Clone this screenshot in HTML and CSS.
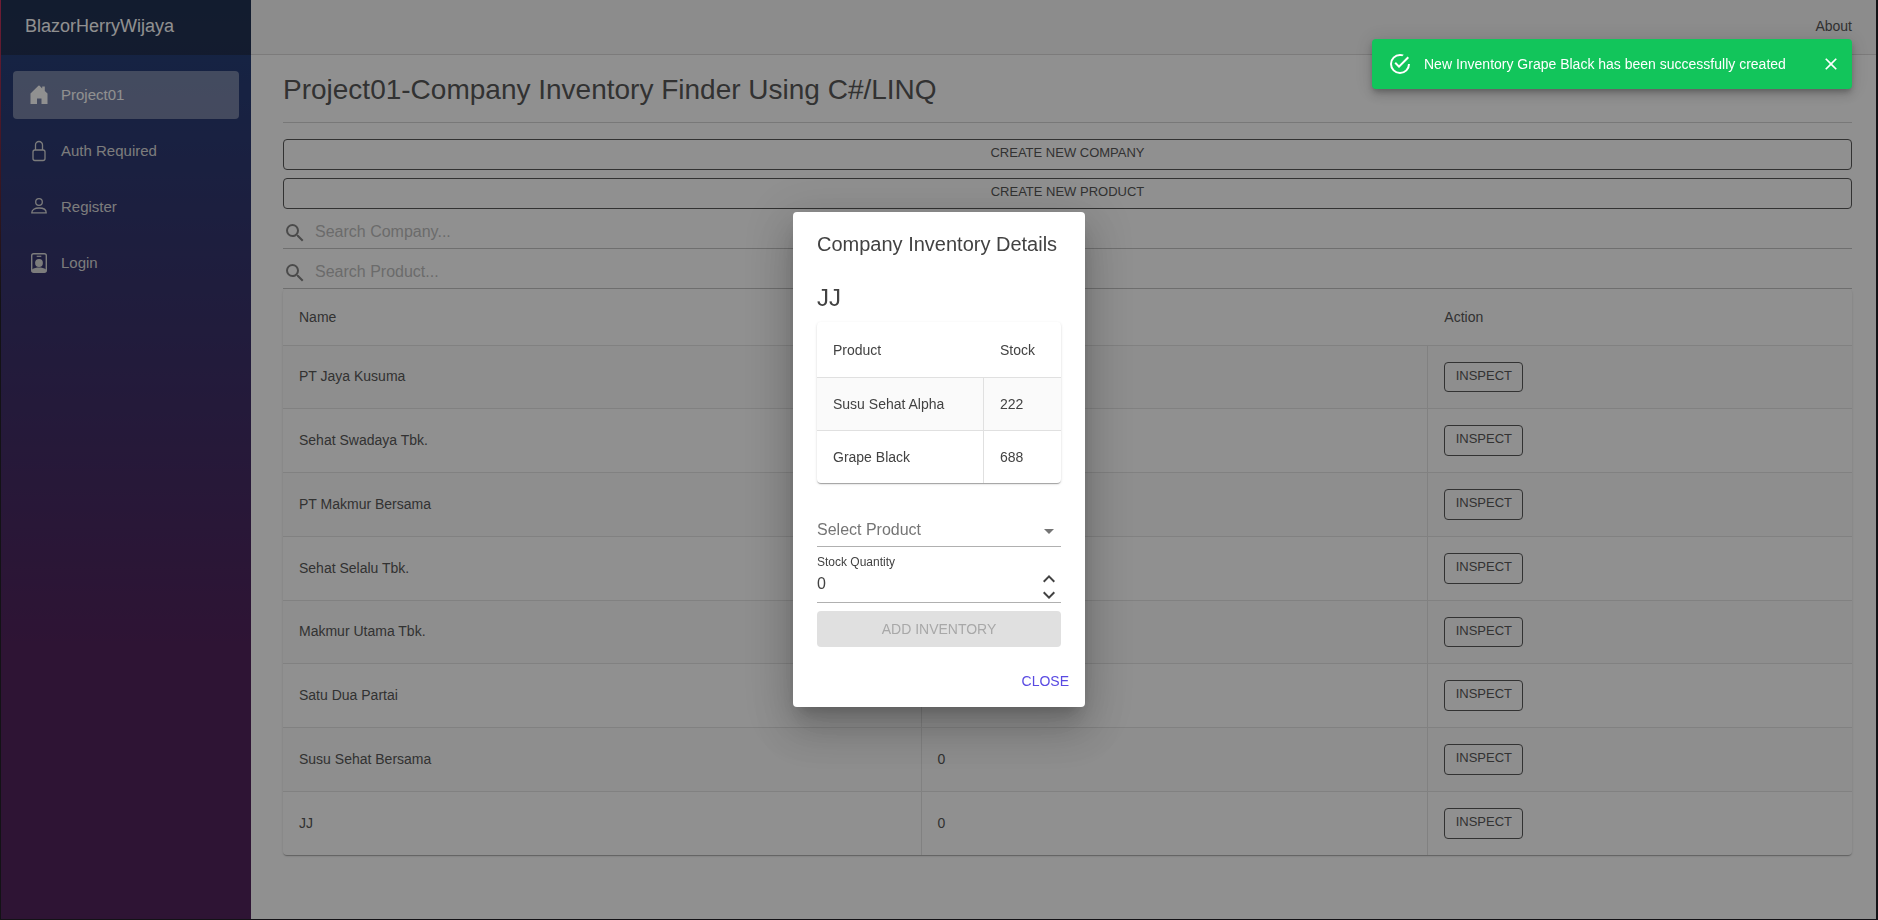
FILE: index.html
```html
<!DOCTYPE html>
<html lang="en">
<head>
<meta charset="utf-8">
<title>BlazorHerryWijaya</title>
<link rel="stylesheet" href="styles.css">
</head>
<body>
<div class="page">
  <aside class="sidebar">
    <div class="brand"><a class="brand-link" href="#">BlazorHerryWijaya</a></div>
    <nav class="nav">
      <a class="nav-link active" href="#">
        <svg class="nav-icon" viewBox="0 0 24 24"><path fill="currentColor" d="M3.500 10.600 11.400 2.800q.6-.6 1.200 0L15.200 5.400V3.400h2.600v4.600l2.700 2.600V21h-6v-5.600H10V21H3.500z"/></svg>
        <span>Project01</span>
      </a>
      <a class="nav-link" href="#">
        <svg class="nav-icon" viewBox="0 0 24 24" fill="none" stroke="currentColor" stroke-width="1.300"><rect x="6" y="11" width="12" height="10.500" rx="2"/><path d="M8.500 11V6a3.500 3.500 0 0 1 7 0v5"/></svg>
        <span>Auth Required</span>
      </a>
      <a class="nav-link" href="#">
        <svg class="nav-icon" viewBox="0 0 24 24" fill="none" stroke="currentColor" stroke-width="1.300"><circle cx="12" cy="7" r="3.300"/><path d="M4.800 17.800c0-3 3-4.800 7.200-4.800s7.200 1.800 7.200 4.800z"/></svg>
        <span>Register</span>
      </a>
      <a class="nav-link" href="#">
        <svg class="nav-icon" viewBox="0 0 24 24"><rect x="4.700" y="2.700" width="14.600" height="18.600" rx="2" fill="none" stroke="currentColor" stroke-width="1.400"/><path stroke="currentColor" stroke-width="1.200" d="M9.700 5.300h4.600"/><circle cx="12" cy="12" r="3.900" fill="currentColor"/><path fill="currentColor" d="M5 18.600c2-1.400 4.500-2 7-2s5 .6 7 2V21H5z"/></svg>
        <span>Login</span>
      </a>
    </nav>
  </aside>
  <main class="main">
    <header class="topbar"><a class="topbar-link" href="#">About</a></header>
    <div class="content">
      <h1 class="title">Project01-Company Inventory Finder Using C#/LINQ</h1>
      <hr class="rule">
      <div class="actions">
        <button class="btn-outline" type="button">CREATE NEW COMPANY</button>
        <button class="btn-outline" type="button">CREATE NEW PRODUCT</button>
      </div>
      <label class="search">
        <svg class="search-icon" viewBox="0 0 24 24"><path fill="currentColor" d="M15.500 14h-.79l-.28-.27A6.471 6.471 0 0 0 16 9.500 6.500 6.500 0 1 0 9.500 16c1.610 0 3.090-.59 4.230-1.570l.27.28v.79l5 4.990L20.490 19l-4.990-5zm-6 0C7.010 14 5 11.990 5 9.500S7.010 5 9.500 5 14 7.010 14 9.500 11.990 14 9.500 14z"/></svg>
        <input class="search-input" type="text" placeholder="Search Company..." aria-label="Search Company">
      </label>
      <label class="search">
        <svg class="search-icon" viewBox="0 0 24 24"><path fill="currentColor" d="M15.500 14h-.79l-.28-.27A6.471 6.471 0 0 0 16 9.500 6.500 6.500 0 1 0 9.500 16c1.610 0 3.090-.59 4.230-1.570l.27.28v.79l5 4.990L20.490 19l-4.990-5zm-6 0C7.010 14 5 11.990 5 9.500S7.010 5 9.500 5 14 7.010 14 9.500 11.990 14 9.500 14z"/></svg>
        <input class="search-input" type="text" placeholder="Search Product..." aria-label="Search Product">
      </label>
      <table class="table companies">
        <thead><tr><th class="col-name">Name</th><th class="col-count"></th><th>Action</th></tr></thead>
        <tbody>
          <tr><td>PT Jaya Kusuma</td><td></td><td><button class="btn-outline btn-small" type="button">INSPECT</button></td></tr>
          <tr><td>Sehat Swadaya Tbk.</td><td></td><td><button class="btn-outline btn-small" type="button">INSPECT</button></td></tr>
          <tr><td>PT Makmur Bersama</td><td></td><td><button class="btn-outline btn-small" type="button">INSPECT</button></td></tr>
          <tr><td>Sehat Selalu Tbk.</td><td></td><td><button class="btn-outline btn-small" type="button">INSPECT</button></td></tr>
          <tr><td>Makmur Utama Tbk.</td><td></td><td><button class="btn-outline btn-small" type="button">INSPECT</button></td></tr>
          <tr><td>Satu Dua Partai</td><td></td><td><button class="btn-outline btn-small" type="button">INSPECT</button></td></tr>
          <tr><td>Susu Sehat Bersama</td><td>0</td><td><button class="btn-outline btn-small" type="button">INSPECT</button></td></tr>
          <tr><td>JJ</td><td>0</td><td><button class="btn-outline btn-small" type="button">INSPECT</button></td></tr>
        </tbody>
      </table>
    </div>
  </main>
</div>

<div class="overlay">
  <section class="dialog" role="dialog" aria-labelledby="dialog-title">
    <h2 class="dialog-title" id="dialog-title">Company Inventory Details</h2>
    <div class="dialog-body">
      <h3 class="company">JJ</h3>
      <table class="table stock">
        <thead><tr><th>Product</th><th class="col-stock">Stock</th></tr></thead>
        <tbody>
          <tr><td>Susu Sehat Alpha</td><td>222</td></tr>
          <tr><td>Grape Black</td><td>688</td></tr>
        </tbody>
      </table>
      <div class="field select-field">
        <select class="select" aria-label="Select Product"><option>Select Product</option></select>
        <svg class="select-arrow" viewBox="0 0 24 24"><path fill="currentColor" d="M7 10l5 5 5-5z"/></svg>
      </div>
      <label class="field-label" for="quantity">Stock Quantity</label>
      <div class="field number-field">
        <input class="number" id="quantity" type="text" inputmode="numeric" value="0">
        <div class="spin">
          <button class="spin-button" type="button" aria-label="Increase"><svg class="spin-icon" viewBox="4 6 16 12"><path fill="currentColor" d="M12 8l-6 6 1.410 1.410L12 10.830l4.590 4.580L18 14z"/></svg></button>
          <button class="spin-button" type="button" aria-label="Decrease"><svg class="spin-icon" viewBox="4 6 16 12"><path fill="currentColor" d="M16.590 8.590L12 13.170 7.410 8.590 6 10l6 6 6-6z"/></svg></button>
        </div>
      </div>
      <button class="btn-add" type="button" disabled>ADD INVENTORY</button>
    </div>
    <div class="dialog-actions"><button class="btn-close" type="button">CLOSE</button></div>
  </section>
</div>

<div class="toast" role="status">
  <svg class="toast-icon" viewBox="0 0 24 24"><path fill="currentColor" d="M20 12A8 8 0 0 1 12 20A8 8 0 0 1 4 12A8 8 0 0 1 12 4C12.760 4 13.500 4.110 14.200 4.310L15.770 2.740C14.610 2.260 13.340 2 12 2A10 10 0 0 0 2 12A10 10 0 0 0 12 22A10 10 0 0 0 22 12M7.910 10.080L6.500 11.500L11 16L21 6L19.590 4.580L11 13.170Z"/></svg>
  <span class="toast-text">New Inventory Grape Black has been successfully created</span>
  <button class="toast-close" type="button" aria-label="Dismiss"><svg class="toast-close-icon" viewBox="0 0 24 24"><path fill="currentColor" d="M19 6.410L17.590 5 12 10.590 6.410 5 5 6.410 10.590 12 5 17.590 6.410 19 12 13.410 17.590 19 19 17.590 13.410 12z"/></svg></button>
</div>
</body>
</html>
```
FILE: styles.css
```css
*, *::before, *::after { box-sizing: border-box; }

body {
  margin: 0;
  min-height: 100vh;
  display: flex;
  background: linear-gradient(180deg, #c01848 0, #05030a 300px) 0 0 / 1px 100% no-repeat #05030a;
  color: #424242;
  font-family: "Liberation Sans", Arial, sans-serif;
  font-size: 14px;
  line-height: 20px;
  padding: 0 2px 1px 1px;
}

button, input, select { font: inherit; color: inherit; margin: 0; }
a { color: inherit; text-decoration: none; }

.page { flex: 1; display: flex; background: #fff; }

.sidebar {
  width: 250px;
  flex: none;
  background: linear-gradient(180deg, rgb(5, 39, 103) 0%, #3a0647 70%);
}
.brand {
  height: 55px;
  display: flex;
  align-items: center;
  padding: 0 24px 3px;
  background: rgba(0, 0, 0, .4);
  color: #fff;
  font-size: 18px;
}
.nav { display: flex; flex-direction: column; gap: 8px; padding: 16px 12px; }
.nav-link {
  height: 48px;
  display: flex;
  align-items: center;
  gap: 10px;
  padding: 0 14px;
  border-radius: 4px;
  color: #d7d7d7;
  font-size: 15px;
}
.nav-link.active { background: rgba(255, 255, 255, .37); color: #fff; }
.nav-icon { width: 24px; height: 24px; }

.main { flex: 1; min-width: 0; }
.topbar {
  height: 55px;
  display: flex;
  align-items: center;
  justify-content: flex-end;
  padding: 0 24px 2px;
  background: #f7f7f7;
  border-bottom: 1px solid #d6d5d5;
}
.content { padding: 18px 24px 0 32px; }
.title { margin: 0; font-size: 28px; line-height: 33px; font-weight: 400; }
.rule { margin: 16px 0; border: 0; border-top: 1px solid #cfcfcf; }

.actions { display: flex; flex-direction: column; gap: 8px; }
.btn-outline {
  background: none;
  border: 1px solid #424242;
  border-radius: 4px;
  font-size: 13px;
  line-height: 1.75;
  padding: 2px 9px 4px;
}
.btn-small { display: block; min-width: 79px; }

.search { display: flex; height: 40px; border-bottom: 1px solid #bdbdbd; gap: 8px; }
.search-icon { width: 24px; height: 24px; margin-top: 12px; color: #757575; flex: none; }
.search-input {
  flex: 1;
  border: 0;
  padding: 7px 0 0;
  background: none;
  font-size: 16px;
  outline: none;
}
.search-input::placeholder { color: #b5b5b5; opacity: 1; }

.table {
  width: 100%;
  border-collapse: separate;
  border-spacing: 0;
  border-radius: 4px;
  background: #fff;
  box-shadow: 0 2px 1px -1px rgba(0, 0, 0, .2), 0 1px 1px 0 rgba(0, 0, 0, .14), 0 1px 3px 0 rgba(0, 0, 0, .12);
}
.table th { font-weight: 400; text-align: left; padding: 18px 16px; border-bottom: 1px solid #e0e0e0; }
.table td { padding: 16px; border-bottom: 1px solid #e0e0e0; }
.table td:not(:last-child) { border-right: 1px solid #e0e0e0; }
.table tbody tr:nth-child(odd) { background: #fafafa; }
.table tbody tr:last-child td { border-bottom: 0; }
.companies td:not(:last-child) { padding-bottom: 17px; }
.col-name { width: 40.7%; }
.col-count { width: 32.3%; }

.overlay {
  position: fixed;
  inset: 0;
  display: flex;
  align-items: center;
  justify-content: center;
  padding-bottom: 2px;
  background: rgba(33, 33, 33, .5);
}
.dialog {
  width: 292px;
  background: #fff;
  border-radius: 4px;
  box-shadow: 0 11px 15px -7px rgba(0, 0, 0, .2), 0 24px 38px 3px rgba(0, 0, 0, .14), 0 9px 46px 8px rgba(0, 0, 0, .12);
}
.dialog-title { margin: 0; padding: 16px 24px; font-size: 20px; line-height: 32px; font-weight: 400; white-space: nowrap; }
.dialog-body { padding: 6px 24px 8px; }
.company { margin: 0 0 8px; font-size: 24px; line-height: 32px; font-weight: 400; }
.col-stock { width: 77px; }
.stock { margin-bottom: 32px; }
.stock th { padding-bottom: 17px; }

.field { position: relative; border-bottom: 1px solid #b0b0b0; }
.select-field { display: flex; height: 32px; }
.select {
  appearance: none;
  flex: 1;
  border: 0;
  padding: 0;
  background: none;
  color: #757575;
  font-size: 16px;
  outline: none;
}
.select-arrow { position: absolute; right: 0; top: 4px; width: 24px; height: 24px; color: #757575; pointer-events: none; }
.field-label { display: block; margin-top: 8px; font-size: 12px; line-height: 14px; }
.number-field { display: flex; height: 34px; }
.number { flex: 1; min-width: 0; border: 0; padding: 0 0 2px; background: none; font-size: 16px; outline: none; }
.spin { display: flex; flex-direction: column; padding: 2px 4px 0; }
.spin-button { display: block; height: 16px; border: 0; padding: 2px 0; background: none; }
.spin-icon { display: block; width: 16px; height: 12px; }
.btn-add {
  width: 100%;
  height: 36px;
  margin-top: 8px;
  border: 0;
  border-radius: 4px;
  background: #e0e0e0;
  color: #a8a8a8;
}
.dialog-actions { display: flex; justify-content: flex-end; padding: 8px; }
.btn-close { height: 36px; border: 0; padding: 0 8px; background: none; color: #594ae2; }

.toast {
  position: fixed;
  top: 39px;
  right: 26px;
  width: 480px;
  height: 50px;
  display: flex;
  align-items: center;
  padding: 0 11px 0 16px;
  border-radius: 4px;
  background: #12c55b;
  color: #fff;
  box-shadow: 0 3px 5px -1px rgba(0, 0, 0, .2), 0 6px 10px 0 rgba(0, 0, 0, .14), 0 1px 18px 0 rgba(0, 0, 0, .12);
}
.toast-icon { width: 24px; height: 24px; margin-right: 12px; }
.toast-text { flex: 1; }
.toast-close { border: 0; padding: 0; background: none; }
.toast-close-icon { display: block; width: 20px; height: 20px; }
```
